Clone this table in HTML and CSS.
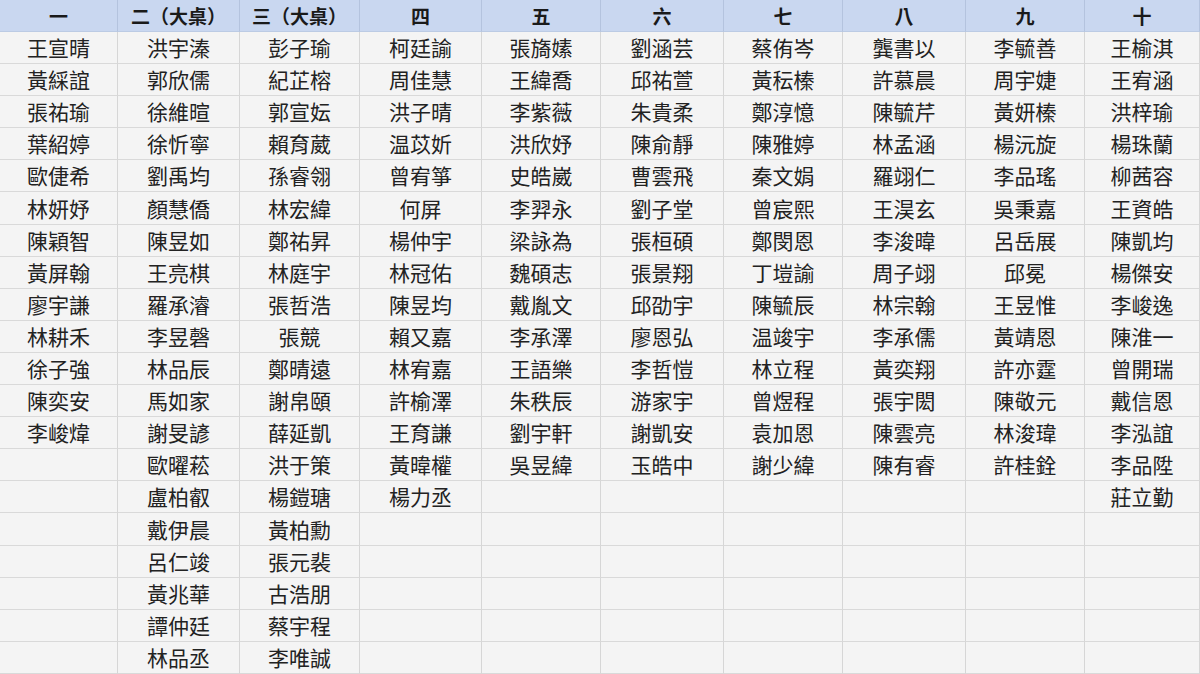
FILE: index.html
```html
<!DOCTYPE html>
<html lang="zh-Hant">
<head>
<meta charset="utf-8">
<title>分桌名單</title>
<link rel="stylesheet" href="styles.css">
</head>
<body>
<div class="sheet">
<div class="hd">一</div><div class="hd">二（大桌）</div><div class="hd">三（大桌）</div><div class="hd">四</div><div class="hd">五</div><div class="hd">六</div><div class="hd">七</div><div class="hd">八</div><div class="hd">九</div><div class="hd">十</div>
<div class="c">王宣晴</div><div class="c">洪宇溱</div><div class="c">彭子瑜</div><div class="c">柯廷諭</div><div class="c">張旖嫊</div><div class="c">劉涵芸</div><div class="c">蔡侑岑</div><div class="c">龔書以</div><div class="c">李毓善</div><div class="c">王榆淇</div>
<div class="c">黃綵誼</div><div class="c">郭欣儒</div><div class="c">紀芷榕</div><div class="c">周佳慧</div><div class="c">王緯喬</div><div class="c">邱祐萱</div><div class="c">黃秐榛</div><div class="c">許慕晨</div><div class="c">周宇婕</div><div class="c">王宥涵</div>
<div class="c">張祐瑜</div><div class="c">徐維暄</div><div class="c">郭宣妘</div><div class="c">洪子晴</div><div class="c">李紫薇</div><div class="c">朱貴柔</div><div class="c">鄭淳憶</div><div class="c">陳毓芹</div><div class="c">黃妍榛</div><div class="c">洪梓瑜</div>
<div class="c">葉紹婷</div><div class="c">徐忻寧</div><div class="c">賴育葳</div><div class="c">温苡妡</div><div class="c">洪欣妤</div><div class="c">陳俞靜</div><div class="c">陳雅婷</div><div class="c">林孟涵</div><div class="c">楊沅旋</div><div class="c">楊珠蘭</div>
<div class="c">歐倢希</div><div class="c">劉禹均</div><div class="c">孫睿翎</div><div class="c">曾宥箏</div><div class="c">史皓崴</div><div class="c">曹雲飛</div><div class="c">秦文娟</div><div class="c">羅翊仁</div><div class="c">李品瑤</div><div class="c">柳茜容</div>
<div class="c">林妍妤</div><div class="c">顏慧僑</div><div class="c">林宏緯</div><div class="c">何屏</div><div class="c">李羿永</div><div class="c">劉子堂</div><div class="c">曾宸熙</div><div class="c">王淏玄</div><div class="c">吳秉嘉</div><div class="c">王資皓</div>
<div class="c">陳穎智</div><div class="c">陳昱如</div><div class="c">鄭祐昇</div><div class="c">楊仲宇</div><div class="c">梁詠為</div><div class="c">張桓碩</div><div class="c">鄭閔恩</div><div class="c">李浚暐</div><div class="c">呂岳展</div><div class="c">陳凱均</div>
<div class="c">黃屏翰</div><div class="c">王亮棋</div><div class="c">林庭宇</div><div class="c">林冠佑</div><div class="c">魏碩志</div><div class="c">張景翔</div><div class="c">丁塏諭</div><div class="c">周子翊</div><div class="c">邱冕</div><div class="c">楊傑安</div>
<div class="c">廖宇謙</div><div class="c">羅承濬</div><div class="c">張哲浩</div><div class="c">陳昱均</div><div class="c">戴胤文</div><div class="c">邱劭宇</div><div class="c">陳毓辰</div><div class="c">林宗翰</div><div class="c">王昱惟</div><div class="c">李峻逸</div>
<div class="c">林耕禾</div><div class="c">李昱磬</div><div class="c">張競</div><div class="c">賴又嘉</div><div class="c">李承澤</div><div class="c">廖恩弘</div><div class="c">温竣宇</div><div class="c">李承儒</div><div class="c">黃靖恩</div><div class="c">陳淮一</div>
<div class="c">徐子強</div><div class="c">林品辰</div><div class="c">鄭晴遠</div><div class="c">林宥嘉</div><div class="c">王語樂</div><div class="c">李哲愷</div><div class="c">林立程</div><div class="c">黃奕翔</div><div class="c">許亦霆</div><div class="c">曾開瑞</div>
<div class="c">陳奕安</div><div class="c">馬如家</div><div class="c">謝帛頤</div><div class="c">許榆澤</div><div class="c">朱秩辰</div><div class="c">游家宇</div><div class="c">曾煜程</div><div class="c">張宇閎</div><div class="c">陳敬元</div><div class="c">戴信恩</div>
<div class="c">李峻煒</div><div class="c">謝旻諺</div><div class="c">薛延凱</div><div class="c">王育謙</div><div class="c">劉宇軒</div><div class="c">謝凱安</div><div class="c">袁加恩</div><div class="c">陳雲亮</div><div class="c">林浚瑋</div><div class="c">李泓誼</div>
<div class="c"></div><div class="c">歐曜菘</div><div class="c">洪于策</div><div class="c">黃暐權</div><div class="c">吳昱緯</div><div class="c">玉皓中</div><div class="c">謝少緯</div><div class="c">陳有睿</div><div class="c">許桂銓</div><div class="c">李品陞</div>
<div class="c"></div><div class="c">盧柏叡</div><div class="c">楊鎧瑭</div><div class="c">楊力丞</div><div class="c"></div><div class="c"></div><div class="c"></div><div class="c"></div><div class="c"></div><div class="c">莊立勤</div>
<div class="c"></div><div class="c">戴伊晨</div><div class="c">黃柏勳</div><div class="c"></div><div class="c"></div><div class="c"></div><div class="c"></div><div class="c"></div><div class="c"></div><div class="c"></div>
<div class="c"></div><div class="c">呂仁竣</div><div class="c">張元裴</div><div class="c"></div><div class="c"></div><div class="c"></div><div class="c"></div><div class="c"></div><div class="c"></div><div class="c"></div>
<div class="c"></div><div class="c">黃兆華</div><div class="c">古浩朋</div><div class="c"></div><div class="c"></div><div class="c"></div><div class="c"></div><div class="c"></div><div class="c"></div><div class="c"></div>
<div class="c"></div><div class="c">譚仲廷</div><div class="c">蔡宇程</div><div class="c"></div><div class="c"></div><div class="c"></div><div class="c"></div><div class="c"></div><div class="c"></div><div class="c"></div>
<div class="c"></div><div class="c">林品丞</div><div class="c">李唯誠</div><div class="c"></div><div class="c"></div><div class="c"></div><div class="c"></div><div class="c"></div><div class="c"></div><div class="c"></div>
</div>
</body>
</html>
```

FILE: styles.css
```css
html, body {
  margin: 0;
  padding: 0;
  background: #f3f3f3;
}

.sheet {
  display: grid;
  grid-template-columns: 118px 122px 120px 122px 119px 123px 119px 123px 119px 115px;
  grid-template-rows: 32px repeat(20, 1fr);
  width: 1200px;
  height: 674px;
  overflow: hidden;
  font-family: "Noto Sans CJK TC", "Noto Sans CJK SC", sans-serif;
  color: #222;
}

.hd,
.c {
  box-sizing: border-box;
  display: flex;
  align-items: center;
  justify-content: center;
  border-right: 1px solid #d6d6d6;
  border-bottom: 1px solid #d9d9d9;
  white-space: nowrap;
}

.hd {
  background: #c9d7f0;
  border-right-color: #b4c3de;
  border-bottom-color: #bccbe4;
  font-weight: 700;
  font-size: 19px;
  color: #1a1a1a;
}

.c {
  background: #f4f4f4;
  font-size: 21px;
  line-height: 1;
}
```
